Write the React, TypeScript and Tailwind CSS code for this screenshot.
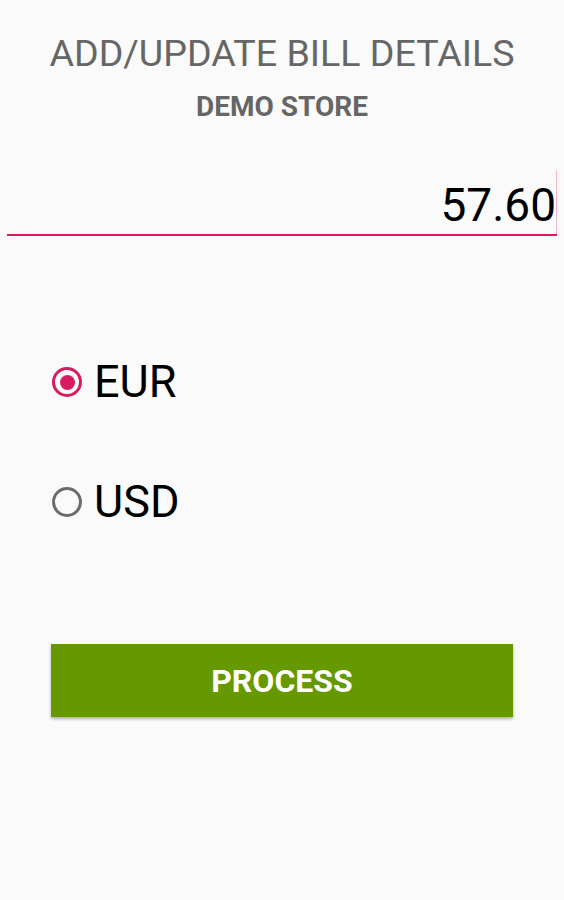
export default function App() {
  return (
    <div className="min-h-[900px] bg-[#fafafa] font-['Roboto',sans-serif] flex flex-col">
      <h1 className="mt-[31px] text-center text-[37.6px] leading-[44px] text-[#666666]">
        ADD/UPDATE BILL DETAILS
      </h1>
      <h2 className="mt-[17px] text-center text-[28px] leading-[30px] font-bold text-[#666666]">
        DEMO STORE
      </h2>

      <div className="mt-[48px] mx-[7px] relative border-b-2 border-[#d81b60] h-[66px] flex items-end justify-end">
        <span className="text-[46px] leading-[58px] text-black pr-[1px]">57.60</span>
        <span className="absolute right-0 top-0 bottom-0 w-[1px] bg-[#f3b4c8]" />
      </div>

      <div className="mt-[126px] ml-[52px] flex flex-col gap-[80px]">
        <label className="flex items-center gap-[12px] h-[40px]">
          <span className="w-[30px] h-[30px] rounded-full border-[3px] border-[#d81b60] flex items-center justify-center">
            <span className="w-[15px] h-[15px] rounded-full bg-[#d81b60]" />
          </span>
          <span className="text-[45px] leading-[40px] text-black">EUR</span>
        </label>
        <label className="flex items-center gap-[12px] h-[40px]">
          <span className="w-[30px] h-[30px] rounded-full border-[3px] border-[#6b6b6b]" />
          <span className="text-[45px] leading-[40px] text-black">USD</span>
        </label>
      </div>

      <button className="mt-[122px] mx-[51px] h-[73px] bg-[#669900] text-white font-bold text-[32px] shadow-[0_2px_3px_rgba(0,0,0,0.3)]">
        PROCESS
      </button>
    </div>
  );
}
